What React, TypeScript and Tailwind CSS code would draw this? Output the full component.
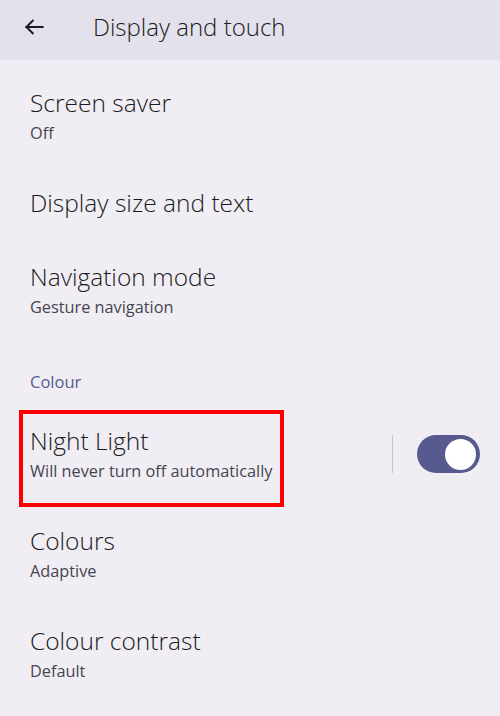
import React from "react";

function Row({ title, subtitle, children }: { title: string; subtitle?: string; children?: React.ReactNode }) {
  return (
    <div className={`relative flex items-center pl-[30px] pr-[20px] ${subtitle ? "h-[100px]" : "h-[74px]"}`}>
      <div className="flex-1 flex flex-col">
        <div className="text-[24.5px] leading-[32px] font-light text-[#1b1b21]">{title}</div>
        {subtitle && <div className="mt-[2px] text-[16.3px] leading-[24px] text-[#46464f]">{subtitle}</div>}
      </div>
      {children}
    </div>
  );
}

export default function App() {
  return (
    <div className="w-[500px] h-[716px] bg-[#f0edf4] overflow-hidden" style={{ fontFamily: '"Open Sans", "Liberation Sans", sans-serif' }}>
      <div className="h-[60px] bg-[#e3e1ec] flex items-center">
        <div className="w-[93px] flex items-center pl-[21px] pb-[6px]">
          <svg width="26" height="26" viewBox="0 0 24 24" fill="none" stroke="#1b1b21" strokeWidth="1.8" strokeLinecap="square">
            <path d="M20 12H5" />
            <path d="M11.5 5.5 5 12l6.5 6.5" strokeLinecap="butt" />
          </svg>
        </div>
        <div className="text-[24px] leading-[32px] font-light text-[#1b1b21] pb-[6px]">Display and touch</div>
      </div>
      <div className="pt-[6px]">
        <Row title="Screen saver" subtitle="Off" />
        <Row title="Display size and text" />
        <Row title="Navigation mode" subtitle="Gesture navigation" />
        <div className="h-[64px] pt-[32px] pl-[30px] text-[16.5px] leading-[20px] text-[#555a92]">Colour</div>
        <Row title="Night Light" subtitle="Will never turn off automatically">
          <div className="flex items-center">
            <div className="w-px h-[38px] bg-[#c8c6cd] mr-[24px]" />
            <div className="w-[63px] h-[38px] rounded-full bg-[#575a8e] flex items-center justify-end pr-[4px]">
              <div className="w-[31px] h-[31px] rounded-full bg-white" />
            </div>
          </div>
          <div className="absolute left-[19px] top-[6px] w-[265px] h-[97px] border-[4px] border-[#ff0000]" />
        </Row>
        <Row title="Colours" subtitle="Adaptive" />
        <Row title="Colour contrast" subtitle="Default" />
      </div>
    </div>
  );
}
